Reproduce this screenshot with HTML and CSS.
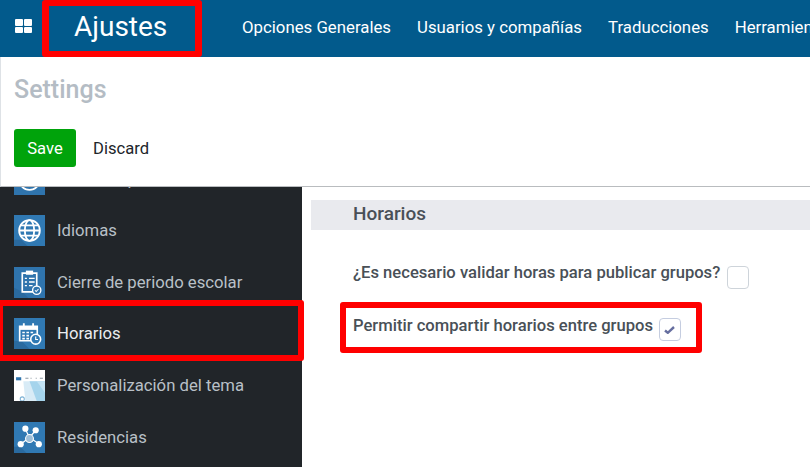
FILE: index.html
```html
<!DOCTYPE html>
<html lang="es">
<head>
  <meta charset="UTF-8">
  <title>Ajustes</title>
  <link rel="stylesheet" href="styles.css">
</head>
<body>
  <!-- Top bar -->
  <nav class="navbar">
    <div class="apps-icon"><i></i><i></i><i></i><i></i></div>
    <a class="brand">Ajustes</a>
    <div class="nav-links">
      <a>Opciones Generales</a>
      <a>Usuarios y compañías</a>
      <a>Traducciones</a>
      <a>Herramientas</a>
    </div>
  </nav>

  <!-- Control panel -->
  <section class="control-panel">
    <h1>Settings</h1>
    <div class="actions">
      <button class="btn-save">Save</button>
      <button class="btn-discard">Discard</button>
    </div>
  </section>

  <div class="main">
    <!-- Sidebar -->
    <aside class="sidebar">
      <div class="side-list">
        <div class="side-item">
          <svg class="side-icon" viewBox="0 0 30 30">
            <rect width="30" height="30" fill="#2f74ad"/>
            <circle cx="15" cy="15" r="10" fill="none" stroke="#fff" stroke-width="1.6"/>
          </svg>
          <span>Curso de periodo</span>
        </div>
        <div class="side-item">
          <svg class="side-icon" viewBox="0 0 30 30">
            <rect width="30" height="30" fill="#3079b3"/>
            <path d="M0 30V24L7 24L13 30Z" fill="#2a6a9f"/>
            <g fill="none" stroke="#fff" stroke-width="1.800">
              <circle cx="15" cy="15" r="10"/>
              <ellipse cx="15" cy="15" rx="4.500" ry="10"/>
              <path d="M5 15H25M6.500 10H23.500M6.500 20H23.500"/>
            </g>
          </svg>
          <span>Idiomas</span>
        </div>
        <div class="side-item">
          <svg class="side-icon" viewBox="0 0 30 30">
            <rect width="30" height="30" fill="#2f74ad"/>
            <path d="M0 30V20L8 24L14 30Z" fill="#2a6a9f"/>
            <path d="M8 6H22V24H8Z" fill="none" stroke="#fff" stroke-width="1.600"/>
            <path d="M11.500 3.500H18.500V7.500H11.500Z" fill="#fff"/>
            <path d="M10.500 11H12.500M14.500 11H20M10.500 14.500H12.500M14.500 14.500H20M10.500 18H12.500M14.500 18H18" stroke="#fff" stroke-width="1.300"/>
            <circle cx="22" cy="22.500" r="4" fill="#2f74ad" stroke="#fff" stroke-width="1.300"/>
            <path d="M20.300 22.500L21.500 23.800L23.700 21.300" fill="none" stroke="#fff"/>
          </svg>
          <span>Cierre de periodo escolar</span>
        </div>
        <div class="side-item side-active">
          <svg class="side-icon" viewBox="0 0 30 30">
            <rect width="30" height="30" fill="#3079b3"/>
            <path d="M0 30V22L8 23L15 30Z" fill="#2a6a9f"/>
            <path d="M5.500 8H22.500V22H5.500Z" fill="none" stroke="#fff" stroke-width="1.600"/>
            <path d="M5.500 8H22.500V11.500H5.500Z" fill="#fff"/>
            <path d="M9.500 5V9M18.500 5V9" stroke="#fff" stroke-width="1.800"/>
            <path d="M8 14H10.500M12 14H14.500M16 14H18.500M8 17H10.500M12 17H14.500M8 20H10.500M12 20H14.500" stroke="#fff" stroke-width="1.600"/>
            <circle cx="21" cy="20.500" r="4.800" fill="#3079b3" stroke="#fff" stroke-width="1.500"/>
            <path d="M21 18V20.800H23.300" fill="none" stroke="#fff" stroke-width="1.100"/>
          </svg>
          <span>Horarios</span>
        </div>
        <div class="side-item">
          <svg class="side-icon" viewBox="0 0 30 30">
            <rect width="30" height="30" fill="#fff"/>
            <path d="M9 11H30V30H11Z" fill="#d8ebf6"/>
            <path d="M15 11H30V30H22Z" fill="#a5d4ec"/>
            <path d="M22 11H30V22Z" fill="#c3e3f4"/>
            <path d="M2 7H7V10H2Z" fill="#2f74ad"/>
            <path d="M11 8H14M16 8H17M21 8H22M25 8H28" stroke="#8d99a3"/>
            <circle cx="8" cy="28" r="2" fill="none" stroke="#7fb3d6"/>
          </svg>
          <span>Personalización del tema</span>
        </div>
        <div class="side-item">
          <svg class="side-icon" viewBox="0 0 30 30">
            <rect width="30" height="30" fill="#3079b3"/>
            <path d="M0 30V24L6 24L12 30Z" fill="#2a6a9f"/>
            <path d="M15 15L11 7M15 15L21 8M15 15L7 21M15 15L24 21" stroke="#fff" stroke-width="1.200"/>
            <g fill="#fff">
              <circle cx="11" cy="6.500" r="3"/>
              <circle cx="21" cy="8" r="3"/>
              <circle cx="6.500" cy="21.500" r="3"/>
              <circle cx="24" cy="21.500" r="3"/>
            </g>
            <circle cx="15" cy="16" r="3.800" fill="#9dbfd9" stroke="#fff"/>
          </svg>
          <span>Residencias</span>
        </div>
      </div>
    </aside>

    <!-- Settings content -->
    <main class="content">
      <h2 class="section-title">Horarios</h2>
      <div class="setting-row setting-first">
        <label>¿Es necesario validar horas para publicar grupos?</label>
        <span class="check"></span>
      </div>
      <div class="setting-row setting-second">
        <label>Permitir compartir horarios entre grupos</label>
        <span class="check checked">
          <svg viewBox="0 0 11 8" width="11" height="8"><path d="M1 4.500L3.800 6.800L10 1" fill="none" stroke="#666e9f" stroke-width="2.400"/></svg>
        </span>
      </div>
    </main>
  </div>

  <!-- Red annotations -->
  <div class="mark mark-brand"></div>
  <div class="mark mark-side"></div>
  <div class="mark mark-setting"></div>
</body>
</html>
```

FILE: styles.css
```css
* {
  margin: 0;
  padding: 0;
  box-sizing: border-box;
}

html, body {
  height: 100%;
  overflow: hidden;
}

body {
  position: relative;
  display: flex;
  flex-direction: column;
  font-family: Roboto, 'Liberation Sans', sans-serif;
  background-color: #ffffff;
}

/* Top bar */
.navbar {
  display: flex;
  align-items: center;
  flex: none;
  height: 57px;
  padding-bottom: 3px;
  background-color: #025a8c;
  color: #ffffff;
  white-space: nowrap;
  overflow: hidden;
}

.apps-icon {
  display: grid;
  flex: none;
  grid-template-columns: 8px 8px;
  grid-auto-rows: 6.5px;
  gap: 1px;
  margin-left: 15px;
  margin-bottom: 2px;
}

.apps-icon i {
  background-color: #ffffff;
  border-radius: 1px;
}

.brand {
  flex: none;
  width: 168px;
  margin-left: 42px;
  font-size: 28px;
  line-height: 54px;
}

.nav-links {
  display: flex;
  flex: none;
  gap: 26px;
  font-size: 16.8px;
}

/* Control panel */
.control-panel {
  flex: none;
  height: 130px;
  padding: 18px 13px 0;
  border-left: 1px solid #dee2e6;
  border-bottom: 1px solid #b9bcbf;
}

.control-panel h1 {
  font-size: 25px;
  font-weight: 500;
  line-height: 30px;
  color: #b4bcc4;
}

.actions {
  display: flex;
  align-items: center;
  margin-top: 24px;
}

.btn-save {
  width: 62px;
  height: 38px;
  border: none;
  border-radius: 3px;
  background-color: #00a30b;
  color: #ffffff;
  font: 16.6px Roboto, sans-serif;
}

.btn-discard {
  margin-left: 17px;
  border: none;
  background: none;
  color: #212529;
  font: 16.6px Roboto, sans-serif;
}

/* Main */
.main {
  display: flex;
  flex: 1;
  min-height: 0;
}

.sidebar {
  flex: none;
  width: 302px;
  background-color: #212529;
  overflow: hidden;
}

.side-list {
  margin-top: -33.7px;
}

.side-item {
  display: flex;
  align-items: center;
  gap: 12px;
  height: 51.6px;
  padding-left: 14px;
  color: #b9c0c7;
  font-size: 16.7px;
  white-space: nowrap;
}

.side-active {
  color: #e9ecef;
}

.side-icon {
  width: 31px;
  height: 31px;
  flex: none;
}

.content {
  flex: 1;
  padding: 13px 0 0 9px;
}

.section-title {
  height: 30px;
  padding-left: 42px;
  background-color: #e9eaee;
  color: #495057;
  font-size: 19px;
  font-weight: 500;
  line-height: 28px;
}

.setting-row {
  display: flex;
  align-items: flex-start;
  gap: 7px;
  height: 46px;
  padding-left: 42px;
  color: #495057;
  font-size: 16.6px;
  font-weight: 500;
  line-height: 24px;
}

.setting-first {
  margin-top: 31px;
  height: 53px;
}

.setting-second {
  gap: 6px;
}

.check {
  display: flex;
  align-items: center;
  justify-content: center;
  width: 22px;
  height: 23px;
  margin-top: 5px;
  border: 1px solid #ced4da;
  border-radius: 4px;
  background-color: #ffffff;
}

.checked {
  margin-top: 4px;
  border-color: #c5cde0;
}

/* Red annotations */
.mark {
  position: absolute;
  border: 6px solid #ff0000;
  border-radius: 3px;
}

.mark-brand {
  left: 42px;
  top: 0;
  width: 160px;
  height: 57px;
  border-width: 6px 7px;
}

.mark-side {
  left: -3px;
  top: 300px;
  width: 307px;
  height: 61px;
}

.mark-setting {
  left: 340px;
  top: 302px;
  width: 362px;
  height: 51px;
}
```
